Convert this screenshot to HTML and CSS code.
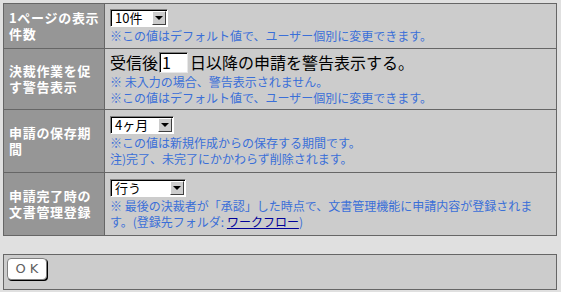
FILE: index.html
```html
<!DOCTYPE html>
<html lang="ja">
<head>
<meta charset="utf-8">
<link rel="stylesheet" href="styles.css">
</head>
<body>
<div class="settings">
  <div class="label">1ページの表示<br>件数</div>
  <div class="value">
    <span class="sel sel-1"><span class="sel-text">10件</span><span class="sel-btn"><span class="tri"></span></span></span>
    <div class="note">※この値はデフォルト値で、ユーザー個別に変更できます。</div>
  </div>

  <div class="label">決裁作業を促<br>す警告表示</div>
  <div class="value">
    <div class="main">受信後<span class="input">1</span>日以降の申請を警告表示する。</div>
    <div class="note">※ 未入力の場合、警告表示されません。<br>※この値はデフォルト値で、ユーザー個別に変更できます。</div>
  </div>

  <div class="label">申請の保存期<br>間</div>
  <div class="value">
    <span class="sel sel-3"><span class="sel-text">4ヶ月</span><span class="sel-btn"><span class="tri"></span></span></span>
    <div class="note">※この値は新規作成からの保存する期間です。<br>注)完了、未完了にかかわらず削除されます。</div>
  </div>

  <div class="label">申請完了時の<br>文書管理登録</div>
  <div class="value">
    <span class="sel sel-4"><span class="sel-text">行う</span><span class="sel-btn"><span class="tri"></span></span></span>
    <div class="note">※ 最後の決裁者が「承認」した時点で、文書管理機能に申請内容が登録されます。(登録先フォルダ: <a class="link" href="#">ワークフロー</a>)</div>
  </div>
</div>

<div class="actions">
  <button class="ok" type="button">OK</button>
</div>
</body>
</html>
```

FILE: styles.css
```css
html, body {
  margin: 0;
  padding: 0;
  background: #e0e0e0;
}
body {
  padding: 3px 4px 0 3px;
  font-family: "Noto Sans CJK JP", "Noto Sans", sans-serif;
  font-size: 12px;
}
.settings {
  display: grid;
  grid-template-columns: 100px 1fr;
  grid-template-rows: 44px 60px 62px 62px;
  gap: 1px;
  padding: 1px;
  background: #666666;
}
.label {
  background: #969696;
  color: #ffffff;
  font-weight: bold;
  font-size: 13px;
  letter-spacing: 0.7px;
  line-height: 16px;
  padding-left: 5px;
  display: flex;
  align-items: center;
}
.value {
  background: #cccccc;
  padding-left: 5px;
  padding-right: 10px;
  display: flex;
  flex-direction: column;
  justify-content: center;
  align-items: flex-start;
}
.note {
  color: #3a6fd8;
  line-height: 16px;
  font-size: 12px;
  margin-top: 1px;
}
.link {
  color: #000099;
  text-decoration: underline;
}
.main {
  font-size: 16px;
  line-height: 21px;
  color: #000;
  display: flex;
  align-items: center;
}
.input {
  display: inline-block;
  box-sizing: border-box;
  width: 29px;
  height: 21px;
  background: #fff;
  border: 1px solid;
  border-color: #808080 #e8e8e8 #e8e8e8 #808080;
  box-shadow: inset 1px 1px 0 #000;
  font-size: 16px;
  line-height: 19px;
  padding-left: 2px;
  margin: 0 2px 0 1px;
}
.sel {
  display: inline-flex;
  box-sizing: border-box;
  height: 18px;
  background: #fff;
  border: 1px solid;
  border-color: #808080 #ffffff #ffffff #808080;
  box-shadow: inset 1px 1px 0 #000;
  padding: 1px;
  align-items: stretch;
}
.sel-1 { width: 58px; }
.sel-3 { width: 64px; }
.sel-4 { width: 76px; }
.sel-text {
  flex: 1;
  font-size: 13px;
  line-height: 14px;
  padding-left: 3px;
  color: #000;
}
.sel-btn {
  width: 14px;
  box-sizing: border-box;
  background: #cccccc;
  border: 1px solid;
  border-color: #ffffff #404040 #404040 #ffffff;
  display: flex;
  align-items: center;
  justify-content: center;
}
.tri {
  width: 0;
  height: 0;
  border-left: 4px solid transparent;
  border-right: 4px solid transparent;
  border-top: 4px solid #000;
}
.actions {
  margin-top: 18px;
  height: 31px;
  background: #cccccc;
  border: 1px solid #666666;
  padding: 3px 0 0 3px;
}
.ok {
  box-sizing: border-box;
  width: 40px;
  height: 22px;
  background: #ffffff;
  border: 1px solid #808080;
  border-radius: 4px;
  box-shadow: 1px 1px 0 #000;
  color: #606060;
  font-family: "DejaVu Sans", sans-serif;
  font-weight: normal;
  font-size: 13px;
  letter-spacing: 4px;
  padding: 0 0 0 4px;
  line-height: 18px;
}
```
